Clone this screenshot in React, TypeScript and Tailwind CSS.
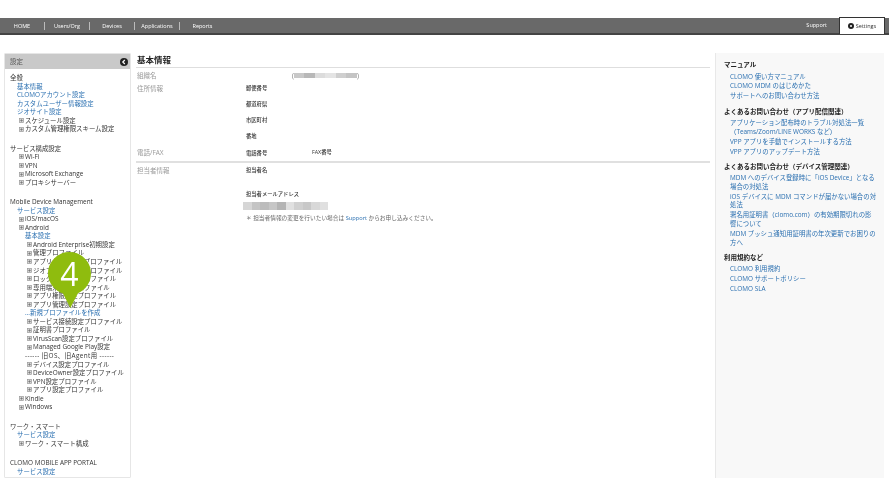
import React from 'react';

type TreeRow = { label: string; level: 0 | 1 | 2 | 3 | 4; link?: boolean; icon?: boolean; gap?: boolean; wide?: boolean };

const TREE: TreeRow[] = [
  { label: '全般', level: 0 },
  { label: '基本情報', level: 1, link: true },
  { label: 'CLOMOアカウント設定', level: 1, link: true },
  { label: 'カスタムユーザー情報設定', level: 1, link: true },
  { label: 'ジオサイト設定', level: 1, link: true },
  { label: 'スケジュール設定', level: 2, icon: true },
  { label: 'カスタム管理権限スキーム設定', level: 2, icon: true },
  { label: 'サービス構成設定', level: 0, gap: true },
  { label: 'Wi-Fi', level: 2, icon: true },
  { label: 'VPN', level: 2, icon: true },
  { label: 'Microsoft Exchange', level: 2, icon: true },
  { label: 'プロキシサーバー', level: 2, icon: true },
  { label: 'Mobile Device Management', level: 0, gap: true },
  { label: 'サービス設定', level: 1, link: true },
  { label: 'iOS/macOS', level: 2, icon: true },
  { label: 'Android', level: 2, icon: true },
  { label: '基本設定', level: 3, link: true },
  { label: 'Android Enterprise初期設定', level: 4, icon: true },
  { label: '管理プロファイル', level: 4, icon: true },
  { label: 'アプリケーションプロファイル', level: 4, icon: true },
  { label: 'ジオフェンス設定プロファイル', level: 4, icon: true },
  { label: 'ロック画面設定プロファイル', level: 4, icon: true },
  { label: '専用端末設定プロファイル', level: 4, icon: true },
  { label: 'アプリ権限設定プロファイル', level: 4, icon: true },
  { label: 'アプリ管理設定プロファイル', level: 4, icon: true },
  { label: '...新規プロファイルを作成', level: 3, link: true },
  { label: 'サービス接続設定プロファイル', level: 4, icon: true },
  { label: '証明書プロファイル', level: 4, icon: true },
  { label: 'VirusScan設定プロファイル', level: 4, icon: true },
  { label: 'Managed Google Play設定', level: 4, icon: true },
  { label: '------ 旧OS、旧Agent用 ------', level: 3, wide: true },
  { label: 'デバイス設定プロファイル', level: 4, icon: true },
  { label: 'DeviceOwner設定プロファイル', level: 4, icon: true },
  { label: 'VPN設定プロファイル', level: 4, icon: true },
  { label: 'アプリ設定プロファイル', level: 4, icon: true },
  { label: 'Kindle', level: 2, icon: true },
  { label: 'Windows', level: 2, icon: true },
  { label: 'ワーク・スマート', level: 0, gap: true },
  { label: 'サービス設定', level: 1, link: true },
  { label: 'ワーク・スマート構成', level: 2, icon: true },
  { label: 'CLOMO MOBILE APP PORTAL', level: 0, gap: true },
  { label: 'サービス設定', level: 1, link: true },
];

const HELP = [
  { title: 'マニュアル', links: ['CLOMO 使い方マニュアル', 'CLOMO MDM のはじめかた', 'サポートへのお問い合わせ方法'] },
  {
    title: 'よくあるお問い合わせ（アプリ配信関連）',
    links: ['アプリケーション配布時のトラブル対処法一覧（Teams/Zoom/LINE WORKS など）', 'VPP アプリを手動でインストールする方法', 'VPP アプリのアップデート方法'],
  },
  {
    title: 'よくあるお問い合わせ（デバイス管理関連）',
    links: [
      'MDM へのデバイス登録時に「iOS Device」となる場合の対処法',
      'iOS デバイスに MDM コマンドが届かない場合の対処法',
      '署名用証明書（clomo.com）の有効期限切れの影響について',
      'MDM プッシュ通知用証明書の年次更新でお困りの方へ',
    ],
  },
  { title: '利用規約など', links: ['CLOMO 利用規約', 'CLOMO サポートポリシー', 'CLOMO SLA'] },
];

const NAV = ['HOME', 'Users/Org', 'Devices', 'Applications', 'Reports'];

const INDENT = ['pl-[5px]', 'pl-[12px]', 'pl-[14px]', 'pl-[20px]', 'pl-[22px]'];

const Redacted = ({ shades, className }: { shades: string[]; className: string }) => (
  <div className={`flex ${className}`}>
    {shades.map((shade, i) => (
      <div key={i} className={`flex-1 ${shade}`} />
    ))}
  </div>
);

const TreeIcon = () => (
  <svg width="5" height="5" viewBox="0 0 5 5" className="mr-[1px] shrink-0">
    <rect x="0.5" y="0.5" width="4" height="4" fill="#d8d8d8" stroke="#999" strokeWidth="0.7" />
    <path d="M1.2 2.5h2.6M2.5 1.2v2.600" stroke="#666" strokeWidth="0.6" />
  </svg>
);

const Sidebar = () => (
  <aside className="w-[127px] h-[425px] shrink-0 bg-white border border-[#e6e6e6] rounded-[1px]">
    <div className="h-[15px] bg-[#c9c9c9] flex items-center justify-between pl-[5px] pr-[2px] text-[#555] text-[6.5px]">
      <span>設定</span>
      <svg width="8" height="8" viewBox="0 0 8 8">
        <circle cx="4" cy="4" r="4" fill="#222" />
        <path d="M4.8 2 2.8 4l2 2" fill="none" stroke="#fff" strokeWidth="1.2" />
      </svg>
    </div>
    <div className="pt-[4.5px]">
      {TREE.map((row, i) => (
        <div
          key={i}
          className={`flex items-center h-[8.55px] whitespace-nowrap text-[6.4px] ${INDENT[row.level]} ${row.gap ? 'mt-[10.8px]' : ''} ${row.wide ? 'tracking-[0.4px]' : ''} ${row.link ? 'text-[#2a6fb0]' : 'text-[#333]'}`}
        >
          {row.icon && <TreeIcon />}
          {row.label}
        </div>
      ))}
    </div>
  </aside>
);

const FieldLabel = ({ children }: { children: React.ReactNode }) => (
  <span className="text-[5.3px] font-medium text-[#333]">{children}</span>
);

const MainPanel = () => (
  <main className="w-[574px] ml-[5px] shrink-0">
    <h1 className="h-[15px] border-b border-[#dedede] text-[8.5px] font-bold text-[#222] leading-[14px] pl-[1px]">基本情報</h1>
    <div className="grid grid-cols-[109px_1fr] text-[6.5px] text-[#999] pl-[1px]">
      <div className="h-[13px] leading-[15px]">組織名</div>
      <div className="h-[13px] flex items-center pl-[46px] pt-[2px] text-[#777]">
        (
        <Redacted className="w-[63px] h-[5px]" shades={['bg-[#c8c8c8]', 'bg-[#b8b8b8]', 'bg-[#dcdcdc]', 'bg-[#e4e4e4]', 'bg-[#cfcfcf]', 'bg-[#c4c4c4]']} />
        )
      </div>
      <div className="leading-[16px]">住所情報</div>
      <div className="flex flex-col">
        <div className="h-[16px] flex items-center"><FieldLabel>郵便番号</FieldLabel></div>
        <div className="h-[16px] flex items-center"><FieldLabel>都道府県</FieldLabel></div>
        <div className="h-[16px] flex items-center"><FieldLabel>市区町村</FieldLabel></div>
        <div className="h-[16px] flex items-center"><FieldLabel>番地</FieldLabel></div>
      </div>
      <div className="leading-[16px]">電話/FAX</div>
      <div className="h-[16px] flex items-center">
        <div className="w-[66px]"><FieldLabel>電話番号</FieldLabel></div>
        <FieldLabel>FAX番号</FieldLabel>
      </div>
    </div>
    <div className="h-[2px] bg-[#e0e0e0]" />
    <div className="grid grid-cols-[109px_1fr] text-[6.5px] text-[#999] pl-[1px]">
      <div className="leading-[15px]">担当者情報</div>
      <div className="flex flex-col">
        <div className="h-[15px] flex items-center"><FieldLabel>担当者名</FieldLabel></div>
        <div className="h-[9px]" />
        <div className="h-[15px] flex items-center"><FieldLabel>担当者メールアドレス</FieldLabel></div>
        <Redacted
          className="w-[85px] h-[8px] -ml-[3px]"
          shades={['bg-[#d6d6d6]', 'bg-[#c4c4c4]', 'bg-[#bcbcbc]', 'bg-[#c6c6c6]', 'bg-[#b4b4b4]', 'bg-[#e0e0e0]', 'bg-[#d0d0d0]', 'bg-[#c8c8c8]', 'bg-[#d8d8d8]', 'bg-[#e0e0e0]']}
        />
        <p className="mt-[4px] text-[5.7px] text-[#666] whitespace-nowrap">
          ＊ 担当者情報の変更を行いたい場合は <span className="text-[#2a6fb0]">Support</span> からお申し込みください。
        </p>
      </div>
    </div>
  </main>
);

const HelpPanel = () => (
  <aside className="w-[169px] h-[425px] ml-[5px] shrink-0 bg-[#f8f8f8] border-l border-[#e8e8e8] pl-[8px] pr-[7px] pt-[7px]">
    {HELP.map((group) => (
      <section key={group.title} className="mb-[5.5px]">
        <h2 className="text-[6.5px] font-bold text-[#222] h-[12.5px] leading-[10px] whitespace-nowrap">{group.title}</h2>
        <ul className="pl-[6px]">
          {group.links.map((link) => (
            <li key={link} className="text-[6.4px] leading-[8.6px] mb-[1.4px] text-[#2a6fb0]">
              {link}
            </li>
          ))}
        </ul>
      </section>
    ))}
  </aside>
);

export default function App() {
  return (
    <div className="relative w-[889px] h-[500px] bg-white overflow-hidden blur-[0.25px] font-['Open_Sans','Noto_Sans_CJK_JP',sans-serif]">
      <div className="h-[18px]" />
      <nav className="h-[17px] bg-[#696969] border-b-2 border-[#444] flex items-center justify-between text-white text-[5.5px]">
        <div className="flex">
          {NAV.map((item, i) => (
            <div key={item} className={`w-[45px] text-center leading-[8px] ${i < NAV.length - 1 ? 'border-r border-[#bbb]' : ''}`}>
              {item}
            </div>
          ))}
        </div>
        <div className="flex items-center h-full">
          <span className="mr-[12px]">Support</span>
          <div className="w-[46px] h-[17px] bg-white text-[#333] flex items-center justify-center gap-[2px] border-t border-x border-[#333] mr-[4px]">
            <svg width="6" height="6" viewBox="0 0 6 6">
              <circle cx="3" cy="3" r="3" fill="#222" />
              <circle cx="3" cy="3" r="1" fill="#fff" />
            </svg>
            Settings
          </div>
        </div>
      </nav>
      <div className="flex pl-[4px] pt-[18px]">
        <Sidebar />
        <MainPanel />
        <HelpPanel />
      </div>
      {/* step marker on top of the tree */}
      <div className="absolute left-[48px] top-[252px] w-[43px] h-[56px]">
        <svg width="43" height="56" viewBox="0 0 43 56" className="absolute inset-0">
          <path d="M21.5 0C33.4 0 43 9.6 43 21.5 43 30.5 37.5 38 30 41.2L22.3 56 15 41.5C6.500 38.500 0 30.800 0 21.500 0 9.600 9.600 0 21.500 0Z" fill="#8fbc0e" />
        </svg>
        <span className="absolute inset-x-0 top-[1px] text-center text-white text-[32px] leading-[42px] font-medium font-['Open_Sans',sans-serif]">4</span>
      </div>
    </div>
  );
}
